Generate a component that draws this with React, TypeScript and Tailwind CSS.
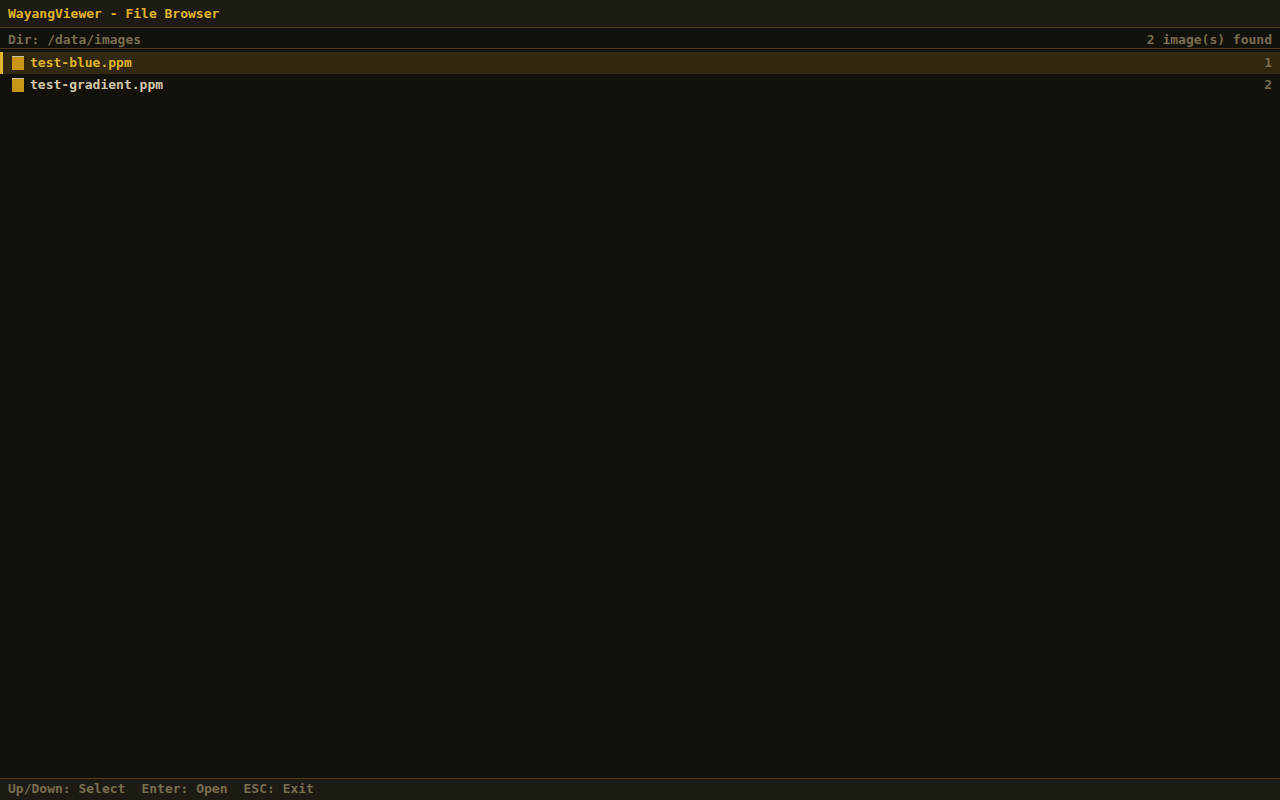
import React, { useEffect, useState } from 'react';

const DIRECTORY = '/data/images';

const files = ['test-blue.ppm', 'test-gradient.ppm'];

const shortcuts = ['Up/Down: Select', 'Enter: Open', 'ESC: Exit'];

function FileIcon() {
  return <span aria-hidden="true" className="h-3.5 w-3 shrink-0 border-t border-[#c8c0a0] bg-[#c89614]" />;
}

interface FileRowProps {
  name: string;
  index: number;
  selected: boolean;
  onSelect: () => void;
}

function FileRow({ name, index, selected, onSelect }: FileRowProps) {
  return (
    <li>
      <button
        type="button"
        aria-pressed={selected}
        onClick={onSelect}
        className={`flex h-[22px] w-full items-center border-l-3 pr-2 pl-[9px] text-left outline-none ${
          selected ? 'border-[#e0b428] bg-[#322810] text-[#e0b428]' : 'border-transparent text-[#d2c8aa]'
        }`}
      >
        <FileIcon />
        <span className="ml-1.5 flex-1 truncate">{name}</span>
        <span className="text-[#786e50]">{index}</span>
      </button>
    </li>
  );
}

export default function App() {
  const [selected, setSelected] = useState(0);

  useEffect(() => {
    const onKeyDown = (e: KeyboardEvent) => {
      if (e.key === 'ArrowDown') setSelected((i) => Math.min(i + 1, files.length - 1));
      if (e.key === 'ArrowUp') setSelected((i) => Math.max(i - 1, 0));
    };
    window.addEventListener('keydown', onKeyDown);
    return () => window.removeEventListener('keydown', onKeyDown);
  }, []);

  return (
    <div className="flex min-h-screen flex-col bg-[#12110c] font-['DejaVu_Sans_Mono',monospace] text-[13px] leading-4 font-bold">
      <header className="flex h-7 items-center border-b border-[#503c14] bg-[#1e1a14] px-2">
        <h1 className="text-[#e0b428]">WayangViewer - File Browser</h1>
      </header>
      <div className="flex h-[21px] items-end justify-between border-b border-[#503c14] px-2 text-[#786e50]">
        <span>Dir: {DIRECTORY}</span>
        <span>{files.length} image(s) found</span>
      </div>
      <main className="flex-1 pt-[3px]">
        <ul>
          {files.map((name, i) => (
            <FileRow key={name} name={name} index={i + 1} selected={i === selected} onSelect={() => setSelected(i)} />
          ))}
        </ul>
      </main>
      <footer className="flex h-[22px] items-start gap-4 border-t border-[#503c14] bg-[#1e1a14] px-2 pt-0.5 text-[#786e50]">
        {shortcuts.map((label) => (
          <span key={label}>{label}</span>
        ))}
      </footer>
    </div>
  );
}
